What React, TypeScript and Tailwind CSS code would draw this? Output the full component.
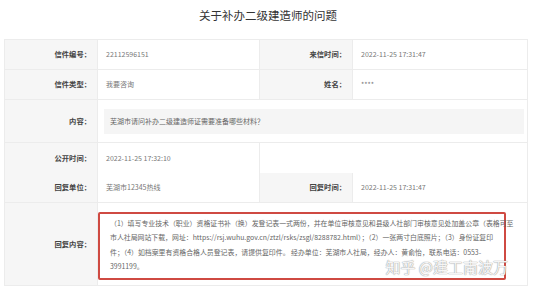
import React from 'react'

const FONT = { fontFamily: '"Noto Sans CJK SC", "Noto Sans", sans-serif' }

const REPLY_LINES = [
  '（1）填写专业技术（职业）资格证书补（换）发登记表一式两份，并在单位审核意见和县级人社部门审核意见处加盖公章（表格可至',
  '市人社局网站下载，网址：https://rsj.wuhu.gov.cn/ztzl/rsks/zsgl/8288782.html）；（2）一张两寸白底照片；（3）身份证复印',
  '件；（4）如档案里有资格合格人员登记表，请提供复印件。 经办单位：芜湖市人社局，经办人：黄俞怡，联系电话：0553-',
  '3991199。',
]

function Label({ children, className = '' }: { children: React.ReactNode; className?: string }) {
  return (
    <div className={`flex items-center justify-end bg-[#f6f6f6] pr-[6px] text-[7.3px] font-bold text-[#444] ${className}`}>
      {children}
    </div>
  )
}

function Value({ children, className = '' }: { children?: React.ReactNode; className?: string }) {
  return (
    <div className={`flex items-center bg-white pl-[8px] text-[7px] text-[#777] ${className}`}>
      {children}
    </div>
  )
}

export default function App() {
  return (
    <div className="h-[286px] w-[536px] overflow-hidden bg-white" style={FONT}>
      <h1 className="pt-[6px] text-center text-[11.5px] leading-[18px] text-[#333]">关于补办二级建造师的问题</h1>

      <div className="ml-[4px] mt-[15px] w-[524px] border border-[#ececec]">
        <div className="grid grid-cols-[92px_162px_93px_175px]">
          {/* row 1 */}
          <Label className="h-[30px] border-b border-[#ececec]">信件编号：</Label>
          <Value className="h-[30px] border-b border-l border-[#ececec]">22112596151</Value>
          <Label className="h-[30px] border-b border-l border-[#ececec]">来信时间：</Label>
          <Value className="h-[30px] border-b border-l border-[#ececec]">2022-11-25 17:31:47</Value>

          {/* row 2 */}
          <Label className="h-[30px] border-b border-[#ececec]">信件类型：</Label>
          <Value className="h-[30px] border-b border-l border-[#ececec]">我要咨询</Value>
          <Label className="h-[30px] border-b border-l border-[#ececec]">姓名：</Label>
          <Value className="h-[30px] border-b border-l border-[#ececec]">****</Value>

          {/* row 3 */}
          <Label className="h-[43px] border-b border-[#ececec]">内容：</Label>
          <div className="col-span-3 flex h-[43px] items-center border-b border-l border-[#ececec] bg-white pl-[6px] pr-[3px]">
            <div className="flex h-[25px] w-full items-center bg-[#f5f5f5] pl-[6px] text-[7px] text-[#666]">
              芜湖市请问补办二级建造师证需要准备哪些材料？
            </div>
          </div>

          {/* row 4 */}
          <Label className="h-[30px]">公开时间：</Label>
          <Value className="h-[30px] border-l border-[#ececec]">2022-11-25 17:32:10</Value>
          <div className="col-span-2 h-[30px] border-l border-[#ececec] bg-white" />

          {/* row 5 */}
          <Label className="h-[30px] border-b border-[#ececec]">回复单位：</Label>
          <Value className="h-[30px] border-b border-l border-[#ececec]">芜湖市12345热线</Value>
          <Label className="h-[30px] border-b border-l border-[#ececec]">回复时间：</Label>
          <Value className="h-[30px] border-b border-l border-[#ececec]">2022-11-25 17:31:47</Value>

          {/* row 6 */}
          <Label className="h-[82px]">回复内容：</Label>
          <div className="col-span-3 h-[82px] border-l border-[#ececec] bg-white pr-[21px] pt-[9px]">
            <div className="relative h-[68px] rounded-[2px] border-2 border-[#cf4a42] pl-[10px] pt-[2px]">
              {REPLY_LINES.map(line => (
                <div key={line} className="whitespace-nowrap text-[6.9px] leading-[14.4px] text-[#666]">
                  {line}
                </div>
              ))}
              <div
                className="absolute bottom-[4px] right-[-4px] whitespace-nowrap text-[15px] leading-none text-white/90"
                style={{ textShadow: '0 0 1px #999, 0 0 1px #999' }}
              >
                知乎 @建工南波万
              </div>
            </div>
          </div>
        </div>
      </div>
    </div>
  )
}
